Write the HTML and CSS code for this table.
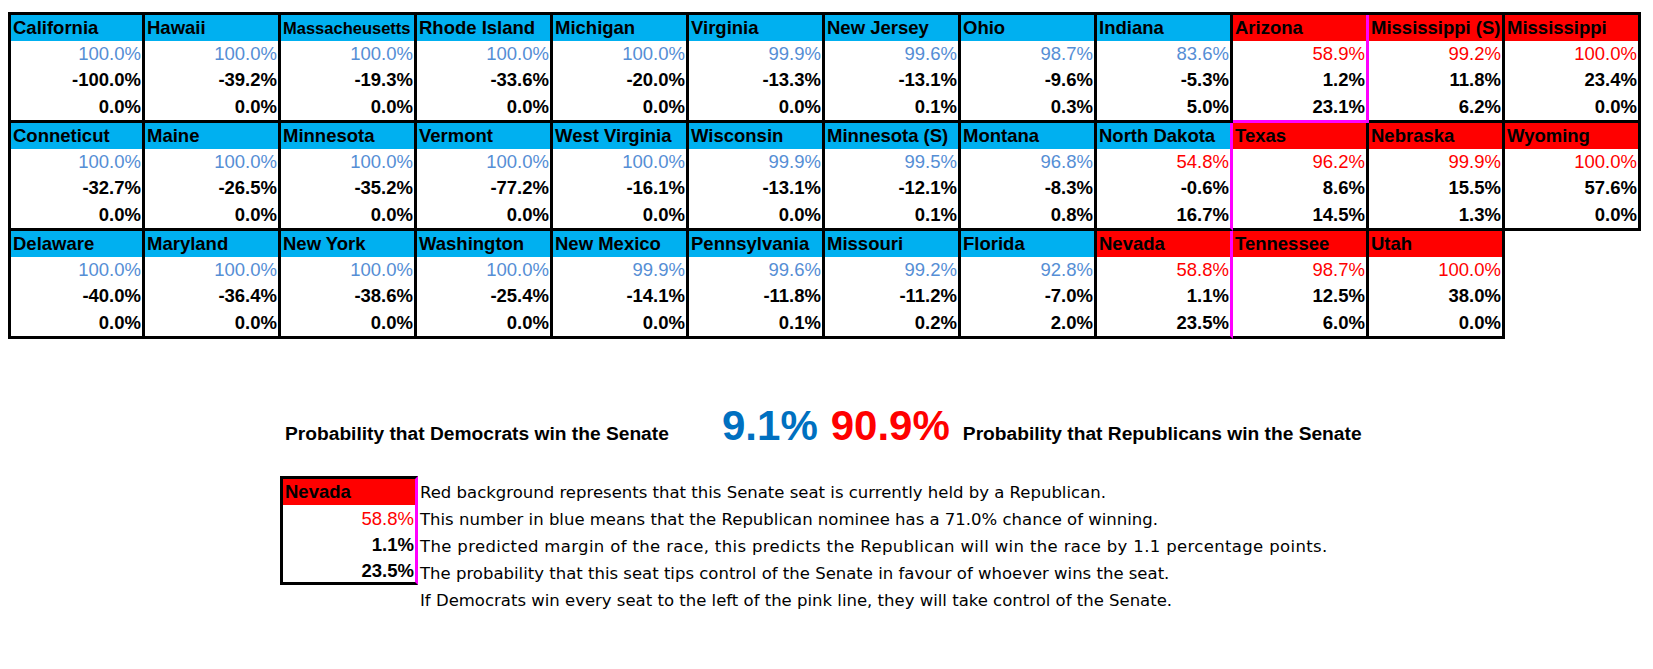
FILE: index.html
```html
<!DOCTYPE html>
<html>
<head>
<meta charset="utf-8">
<link rel="stylesheet" href="styles.css">
</head>
<body>
<div class="board">
  <div class="seat d"><div class="name">California</div><div class="v pd">100.0%</div><div class="v b">-100.0%</div><div class="v b">0.0%</div></div>
  <div class="seat d"><div class="name">Hawaii</div><div class="v pd">100.0%</div><div class="v b">-39.2%</div><div class="v b">0.0%</div></div>
  <div class="seat d"><div class="name small">Massacheusetts</div><div class="v pd">100.0%</div><div class="v b">-19.3%</div><div class="v b">0.0%</div></div>
  <div class="seat d"><div class="name">Rhode Island</div><div class="v pd">100.0%</div><div class="v b">-33.6%</div><div class="v b">0.0%</div></div>
  <div class="seat d"><div class="name">Michigan</div><div class="v pd">100.0%</div><div class="v b">-20.0%</div><div class="v b">0.0%</div></div>
  <div class="seat d"><div class="name">Virginia</div><div class="v pd">99.9%</div><div class="v b">-13.3%</div><div class="v b">0.0%</div></div>
  <div class="seat d"><div class="name">New Jersey</div><div class="v pd">99.6%</div><div class="v b">-13.1%</div><div class="v b">0.1%</div></div>
  <div class="seat d"><div class="name">Ohio</div><div class="v pd">98.7%</div><div class="v b">-9.6%</div><div class="v b">0.3%</div></div>
  <div class="seat d"><div class="name">Indiana</div><div class="v pd">83.6%</div><div class="v b">-5.3%</div><div class="v b">5.0%</div></div>
  <div class="seat r mr mb"><div class="name">Arizona</div><div class="v pr">58.9%</div><div class="v b">1.2%</div><div class="v b">23.1%</div></div>
  <div class="seat r"><div class="name">Mississippi (S)</div><div class="v pr">99.2%</div><div class="v b">11.8%</div><div class="v b">6.2%</div></div>
  <div class="seat r"><div class="name">Mississippi</div><div class="v pr">100.0%</div><div class="v b">23.4%</div><div class="v b">0.0%</div></div>

  <div class="seat d"><div class="name">Conneticut</div><div class="v pd">100.0%</div><div class="v b">-32.7%</div><div class="v b">0.0%</div></div>
  <div class="seat d"><div class="name">Maine</div><div class="v pd">100.0%</div><div class="v b">-26.5%</div><div class="v b">0.0%</div></div>
  <div class="seat d"><div class="name">Minnesota</div><div class="v pd">100.0%</div><div class="v b">-35.2%</div><div class="v b">0.0%</div></div>
  <div class="seat d"><div class="name">Vermont</div><div class="v pd">100.0%</div><div class="v b">-77.2%</div><div class="v b">0.0%</div></div>
  <div class="seat d"><div class="name">West Virginia</div><div class="v pd">100.0%</div><div class="v b">-16.1%</div><div class="v b">0.0%</div></div>
  <div class="seat d"><div class="name">Wisconsin</div><div class="v pd">99.9%</div><div class="v b">-13.1%</div><div class="v b">0.0%</div></div>
  <div class="seat d"><div class="name">Minnesota (S)</div><div class="v pd">99.5%</div><div class="v b">-12.1%</div><div class="v b">0.1%</div></div>
  <div class="seat d"><div class="name">Montana</div><div class="v pd">96.8%</div><div class="v b">-8.3%</div><div class="v b">0.8%</div></div>
  <div class="seat d mr"><div class="name">North Dakota</div><div class="v pr">54.8%</div><div class="v b">-0.6%</div><div class="v b">16.7%</div></div>
  <div class="seat r"><div class="name">Texas</div><div class="v pr">96.2%</div><div class="v b">8.6%</div><div class="v b">14.5%</div></div>
  <div class="seat r"><div class="name">Nebraska</div><div class="v pr">99.9%</div><div class="v b">15.5%</div><div class="v b">1.3%</div></div>
  <div class="seat r"><div class="name">Wyoming</div><div class="v pr">100.0%</div><div class="v b">57.6%</div><div class="v b">0.0%</div></div>

  <div class="seat d"><div class="name">Delaware</div><div class="v pd">100.0%</div><div class="v b">-40.0%</div><div class="v b">0.0%</div></div>
  <div class="seat d"><div class="name">Maryland</div><div class="v pd">100.0%</div><div class="v b">-36.4%</div><div class="v b">0.0%</div></div>
  <div class="seat d"><div class="name">New York</div><div class="v pd">100.0%</div><div class="v b">-38.6%</div><div class="v b">0.0%</div></div>
  <div class="seat d"><div class="name">Washington</div><div class="v pd">100.0%</div><div class="v b">-25.4%</div><div class="v b">0.0%</div></div>
  <div class="seat d"><div class="name">New Mexico</div><div class="v pd">99.9%</div><div class="v b">-14.1%</div><div class="v b">0.0%</div></div>
  <div class="seat d"><div class="name">Pennsylvania</div><div class="v pd">99.6%</div><div class="v b">-11.8%</div><div class="v b">0.1%</div></div>
  <div class="seat d"><div class="name">Missouri</div><div class="v pd">99.2%</div><div class="v b">-11.2%</div><div class="v b">0.2%</div></div>
  <div class="seat d"><div class="name">Florida</div><div class="v pd">92.8%</div><div class="v b">-7.0%</div><div class="v b">2.0%</div></div>
  <div class="seat r mr"><div class="name">Nevada</div><div class="v pr">58.8%</div><div class="v b">1.1%</div><div class="v b">23.5%</div></div>
  <div class="seat r"><div class="name">Tennessee</div><div class="v pr">98.7%</div><div class="v b">12.5%</div><div class="v b">6.0%</div></div>
  <div class="seat r"><div class="name">Utah</div><div class="v pr">100.0%</div><div class="v b">38.0%</div><div class="v b">0.0%</div></div>
</div>

<div class="summary">
  <div class="label dem-label">Probability that Democrats win the Senate</div>
  <div class="big blue">9.1%</div>
  <div class="big red">90.9%</div>
  <div class="label rep-label">Probability that Republicans win the Senate</div>
</div>

<div class="legend">
  <div class="seat r key"><div class="name">Nevada</div><div class="v pr">58.8%</div><div class="v b">1.1%</div><div class="v b">23.5%</div></div>
  <div class="notes">
    <div>Red background represents that this Senate seat is currently held by a Republican.</div>
    <div>This number in blue means that the Republican nominee has a 71.0% chance of winning.</div>
    <div class="wide">The predicted margin of the race, this predicts the Republican will win the race by 1.1 percentage points.</div>
    <div>The probability that this seat tips control of the Senate in favour of whoever wins the seat.</div>
    <div>If Democrats win every seat to the left of the pink line, they will take control of the Senate.</div>
  </div>
</div>
</body>
</html>
```

FILE: styles.css
```css
* { box-sizing: border-box; }

body {
  margin: 0;
  background: #fff;
  color: #000;
  font-family: "Liberation Sans", Arial, sans-serif;
}

.board {
  display: grid;
  grid-template-columns: 134px repeat(11, 136px);
  width: 1633px;
  margin: 12px 0 0 8px;
  border-top: 3px solid #000;
  border-left: 3px solid #000;
}

.seat {
  display: grid;
  grid-template-rows: 26px 26px 26px 27px;
  border-right: 3px solid #000;
  border-bottom: 3px solid #000;
}

.seat.mr { border-right-color: #ff00ff; }
.seat.mb { border-bottom-color: #ff00ff; }

.name {
  font-weight: 700;
  font-size: 18.5px;
  line-height: 26px;
  padding-left: 2px;
  white-space: nowrap;
  overflow: hidden;
}

.name.small { font-size: 16.5px; }

.d .name { background: #00b0f0; }
.r .name { background: #ff0000; }

.v {
  font-size: 18.5px;
  line-height: 26px;
  text-align: right;
  padding-right: 1px;
  white-space: nowrap;
}

.v:last-child { line-height: 27px; }

.pd { color: #558ed5; }
.pr { color: #ff0000; }
.b { font-weight: 700; }

.summary {
  display: flex;
  align-items: baseline;
  height: 44px;
  margin: 65px 0 0 285px;
}

.label {
  font-weight: 700;
  font-size: 19.2px;
  white-space: nowrap;
}

.dem-label { width: 437px; }

.big {
  font-size: 42px;
  font-weight: 700;
  line-height: 44px;
  margin-right: 13px;
}

.blue { color: #0070c0; }
.red { color: #ff0000; }

.legend {
  display: flex;
  margin: 28px 0 0 280px;
}

.seat.key {
  width: 138px;
  height: 109px;
  border-top: 3px solid #000;
  border-left: 3px solid #000;
  border-right: 3px solid #ff00ff;
  grid-template-rows: 26px 26px 26px 25px;
}

.seat.key .v { line-height: 27px; }

.notes {
  padding-top: 3px;
  padding-left: 2px;
  font-family: "DejaVu Sans", sans-serif;
  font-size: 16.5px;
  line-height: 27px;
  white-space: nowrap;
}

.notes .wide { letter-spacing: 0.35px; }
```
